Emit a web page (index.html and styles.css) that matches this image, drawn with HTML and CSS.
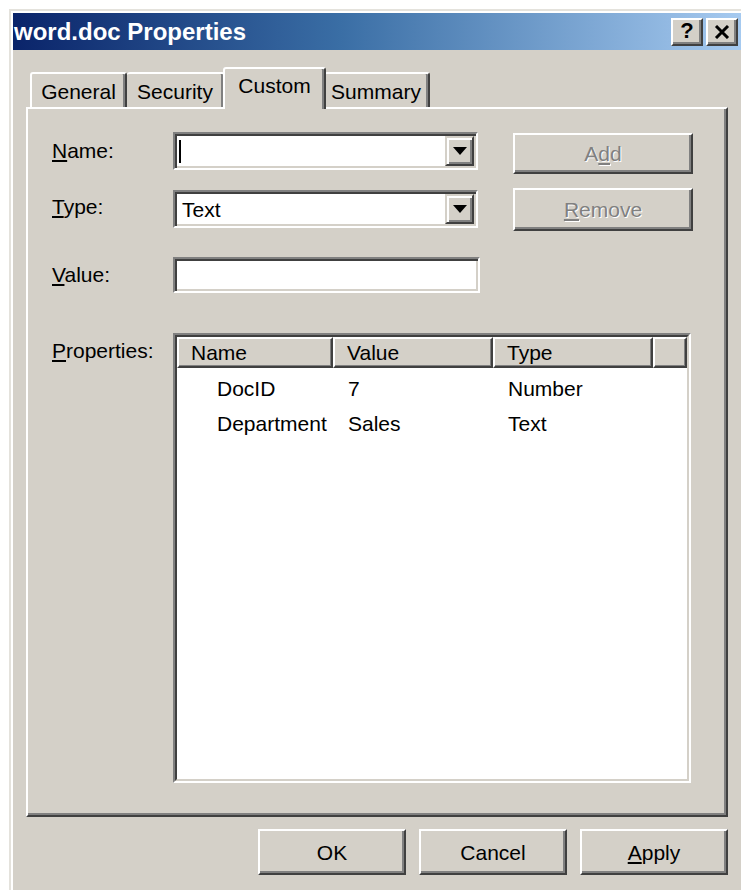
FILE: index.html
```html
<!DOCTYPE html>
<html lang="en">
<head>
<meta charset="utf-8">
<title>word.doc Properties</title>
<link rel="stylesheet" href="styles.css">
</head>
<body>
<div class="window">
  <div class="titlebar">
    <span class="title">word.doc Properties</span>
    <div class="caption-buttons">
      <button class="cap-btn help" type="button">?</button>
      <button class="cap-btn close" type="button" aria-label="Close">
        <svg width="16" height="14" viewBox="0 0 16 14"><path d="M2 1 L14 13 M14 1 L2 13" stroke="#000" stroke-width="3" fill="none"/></svg>
      </button>
    </div>
  </div>

  <div class="client">
    <div class="tabs">
      <div class="tab tab-general">General</div>
      <div class="tab tab-security">Security</div>
      <div class="tab tab-custom active">Custom</div>
      <div class="tab tab-summary">Summary</div>
    </div>

    <div class="panel">
      <div class="row row-name">
        <label class="label"><u>N</u>ame:</label>
        <div class="combo">
          <div class="combo-field"><span class="caret"></span></div>
          <div class="combo-arrow"><span class="arrow"></span></div>
        </div>
        <button class="btn side-btn disabled" type="button">A<u>d</u>d</button>
      </div>

      <div class="row row-type">
        <label class="label"><u>T</u>ype:</label>
        <div class="combo">
          <div class="combo-field">Text</div>
          <div class="combo-arrow"><span class="arrow"></span></div>
        </div>
        <button class="btn side-btn disabled remove" type="button"><u>R</u>emove</button>
      </div>

      <div class="row row-value">
        <label class="label"><u>V</u>alue:</label>
        <div class="textbox"></div>
      </div>

      <div class="row row-props">
        <label class="label props-label"><u>P</u>roperties:</label>
        <div class="list">
          <div class="list-inner">
            <div class="list-header">
              <div class="hcell col-name">Name</div>
              <div class="hcell col-value">Value</div>
              <div class="hcell col-type">Type</div>
              <div class="hcell col-fill"></div>
            </div>
            <div class="list-body">
              <div class="list-row">
                <div class="cell col-name indent">DocID</div>
                <div class="cell col-value">7</div>
                <div class="cell col-type">Number</div>
              </div>
              <div class="list-row">
                <div class="cell col-name indent">Department</div>
                <div class="cell col-value">Sales</div>
                <div class="cell col-type">Text</div>
              </div>
            </div>
          </div>
        </div>
      </div>
    </div>

    <div class="actions">
      <button class="btn action-btn" type="button">OK</button>
      <button class="btn action-btn" type="button">Cancel</button>
      <button class="btn action-btn" type="button"><u>A</u>pply</button>
    </div>
  </div>
</div>
</body>
</html>
```

FILE: styles.css
```css
* {
  box-sizing: border-box;
}

html, body {
  margin: 0;
  padding: 0;
  background: #fff;
  overflow: hidden;
}

body {
  font-family: "Liberation Sans", Arial, sans-serif;
  font-size: 21px;
  color: #000;
}

u {
  text-decoration: underline;
  text-underline-offset: 2px;
}

/* dialog frame */
.window {
  margin: 9px 0 0 9px;
  width: 736px;
  height: 881px;
  padding: 4px 4px 0 4px;
  background: #d4d0c8;
  box-shadow: inset 2px 2px 0 #e4e2dc, inset 4px 4px 0 #fff;
}

.titlebar {
  height: 37px;
  display: flex;
  align-items: center;
  justify-content: space-between;
  padding: 0 3px 0 1px;
  background: linear-gradient(to right, #0a246a 0%, #3a6ea5 45%, #a6caf0 100%);
}

.title {
  font-family: "Liberation Sans", Arial, sans-serif;
  font-weight: bold;
  font-size: 24px;
  color: #fff;
  padding-top: 1px;
}

.caption-buttons {
  display: flex;
  gap: 3px;
}

.cap-btn {
  width: 32px;
  height: 28px;
  padding: 0;
  display: flex;
  align-items: center;
  justify-content: center;
  background: #d4d0c8;
  border: 2px solid;
  border-color: #fff #404040 #404040 #fff;
  box-shadow: inset -2px -2px 0 #808080;
  font-family: "Liberation Sans", Arial, sans-serif;
  font-weight: bold;
  font-size: 22px;
  color: #000;
  line-height: 1;
}

.cap-btn.help {
  padding-bottom: 2px;
}

.cap-btn svg {
  display: block;
}

/* client area */
.client {
  padding: 17px 13px 0 13px;
}

.tabs {
  display: flex;
  align-items: flex-end;
  height: 40px;
  padding-left: 4px;
  position: relative;
  z-index: 1;
}

.tab {
  height: 35px;
  display: flex;
  align-items: center;
  justify-content: center;
  border: 2px solid;
  border-bottom: none;
  border-color: #fff #404040 transparent #fff;
  box-shadow: inset -2px 0 0 #808080;
  border-radius: 3px 3px 0 0;
  background: #d4d0c8;
  padding-top: 2px;
}

.tab-general { width: 97px; }
.tab-security { width: 98px; border-left: none; }
.tab-custom { width: 99px; }
.tab-summary { width: 106px; border-left: none; }

.tab.active {
  height: 42px;
  margin: 0 -2px -2px -2px;
  width: 103px;
  padding-top: 0;
  padding-bottom: 6px;
  position: relative;
  z-index: 2;
}

.panel {
  height: 710px;
  border: 2px solid;
  border-color: #fff #404040 #404040 #fff;
  box-shadow: inset -2px -2px 0 #808080;
  padding: 23px 0 0 24px;
}

.row {
  display: flex;
  align-items: flex-start;
}

.label {
  width: 121px;
  flex: none;
  line-height: 38px;
  white-space: nowrap;
}

.row-type {
  margin-top: 14px;
}

.row-type .combo {
  margin-top: 2px;
}

.row-value {
  margin-top: 26px;
}

.row-value .label {
  line-height: 36px;
}

.row-props {
  margin-top: 40px;
}

.props-label {
  line-height: 32px;
  margin-top: 2px;
}

/* sunken edit fields */
.combo,
.textbox {
  width: 305px;
  height: 38px;
  flex: none;
  display: flex;
  background: #fff;
  border: 2px solid;
  border-color: #808080 #fff #fff #808080;
  box-shadow: inset 2px 2px 0 #404040, inset -2px -2px 0 #d4d0c8;
  padding: 2px;
}

.textbox {
  width: 307px;
  height: 36px;
}

.combo-field {
  flex: 1;
  display: flex;
  align-items: center;
  padding-left: 5px;
  line-height: 1;
}

.caret {
  display: block;
  width: 2px;
  height: 23px;
  margin-left: -3px;
  background: #000;
}

.combo-arrow {
  width: 29px;
  flex: none;
  display: flex;
  align-items: center;
  justify-content: center;
  background: #d4d0c8;
  border: 2px solid;
  border-color: #d4d0c8 #404040 #404040 #d4d0c8;
  box-shadow: inset 2px 2px 0 #fff, inset -2px -2px 0 #808080;
}

.arrow {
  width: 0;
  height: 0;
  border-left: 7px solid transparent;
  border-right: 7px solid transparent;
  border-top: 8px solid #000;
}

/* raised push buttons */
.btn {
  font-family: "Liberation Sans", Arial, sans-serif;
  font-size: 21px;
  color: #000;
  background: #d4d0c8;
  border: 2px solid;
  border-color: #fff #404040 #404040 #fff;
  box-shadow: inset -2px -2px 0 #808080;
  padding: 0;
  line-height: 1;
}

.btn.disabled {
  color: #808080;
  text-shadow: 1px 1px 0 #fff;
}

.side-btn {
  width: 180px;
  height: 41px;
  margin-left: 35px;
  margin-top: 1px;
}

.side-btn.remove {
  margin-top: 0;
  height: 43px;
}

/* list view */
.list {
  width: 518px;
  height: 450px;
  flex: none;
  border: 2px solid;
  border-color: #808080 #fff #fff #808080;
  background: #fff;
}

.list-inner {
  height: 100%;
  border: 2px solid;
  border-color: #404040 #d4d0c8 #d4d0c8 #404040;
}

.list-header {
  display: flex;
  height: 31px;
}

.hcell {
  background: #d4d0c8;
  border: 2px solid;
  border-color: #fff #404040 #404040 #fff;
  box-shadow: inset -1px -1px 0 #808080;
  padding-left: 12px;
  display: flex;
  align-items: center;
  line-height: 1;
}

.col-name { width: 156px; }
.col-value { width: 160px; }
.col-type { width: 160px; }
.hcell.col-fill { flex: 1; padding: 0; }

.list-body {
  padding-top: 3px;
}

.list-row {
  display: flex;
  height: 35px;
  align-items: center;
}

.cell {
  padding-left: 15px;
  white-space: nowrap;
}

.cell.indent {
  padding-left: 40px;
}

/* bottom command buttons */
.actions {
  display: flex;
  justify-content: flex-end;
  gap: 13px;
  margin-top: 12px;
}

.action-btn {
  width: 148px;
  height: 46px;
}
```
